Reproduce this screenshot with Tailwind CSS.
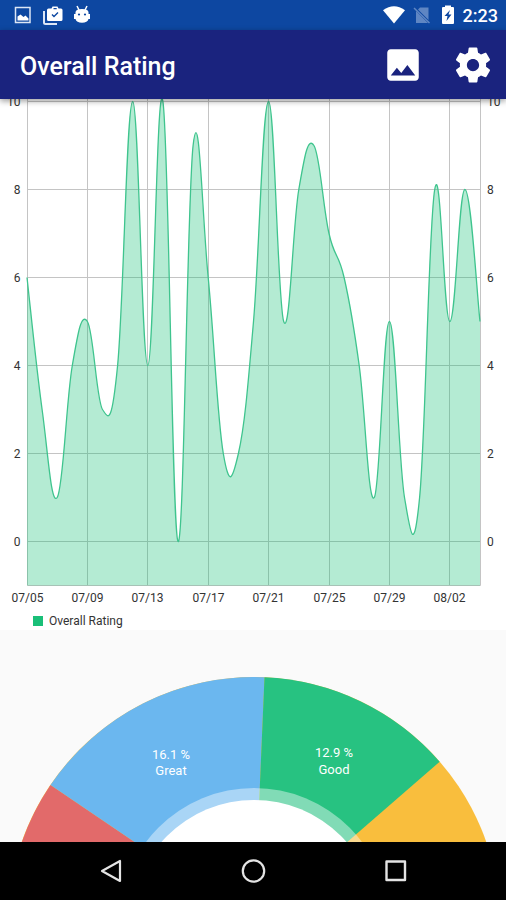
<!DOCTYPE html>
<html lang="en">
<head>
<meta charset="utf-8">
<meta name="viewport" content="width=device-width, initial-scale=1">
<title>Overall Rating</title>
<script src="https://cdn.jsdelivr.net/npm/@tailwindcss/browser@4"></script>
</head>
<body class="flex h-screen flex-col overflow-hidden bg-[#fafafa] font-['Roboto',sans-serif]">
  <div class="flex h-[30px] shrink-0 items-center justify-between bg-[#0d47a1] pr-2 pl-3 text-white">
    <div class="flex items-center gap-2">
      <svg class="size-[22px]" viewBox="0 0 22 22" fill="none" aria-label="Screenshot"><path d="M3.500 3.500h14.500v15H3.500z" stroke="#dce6f5" stroke-width="1.500"/><path d="M5.500 16.500v-4l3-2 3 2.500 2-1.500 3 3v2z" fill="#fff"/></svg>
      <svg class="size-[22px]" viewBox="0 0 22 22" aria-label="Work"><path d="M2 8v11.500c0 .8.700 1.500 1.500 1.500H15" transform="translate(0 -1)" fill="none" stroke="#dce6f5" stroke-width="2"/><path fill-rule="evenodd" d="M9.500 4.500 10.500 2.500h5l1 2H19a1.500 1.500 0 0 1 1.500 1.500v9.500A1.500 1.500 0 0 1 19 17H6.500A1.500 1.500 0 0 1 5 15.500V6A1.500 1.500 0 0 1 6.500 4.500zM11.500 4h3.200v1.200h-3.200z" fill="#fff"/><path d="m10 10.500 2 2 4-4" fill="none" stroke="#0d47a1" stroke-width="1.400"/></svg>
      <svg class="size-[22px]" viewBox="0 0 22 22" aria-label="Android"><path d="m5 2 2 4M15 2l-2 4" stroke="#fff" stroke-width="1.500"/><path d="M3.500 8Q4 5 10 5t6.500 3v2H18v5h-1.500Q15.500 18.800 10 18.800T3.500 15H2v-5h1.500z" fill="#fff"/><circle cx="7" cy="10.500" r="1.100" fill="#0d47a1"/><circle cx="13" cy="10.500" r="1.100" fill="#0d47a1"/></svg>
    </div>
    <div class="flex items-center">
      <svg class="mr-2 h-5 w-[22px]" viewBox="0 0 22 20" aria-label="Wi-Fi"><path d="M0 5.300Q11-3 22 5.300L11 18.500z" fill="#fff"/></svg>
      <svg class="mr-2 size-5" viewBox="0 0 20 20" aria-label="No SIM"><path d="M7 2.500h8.500V15L5 4.500zM3 6l12 12H3z" fill="#5f86c3"/><path d="m1 3 15.500 15" stroke="#5f86c3" stroke-width="1.500"/></svg>
      <svg class="mr-2 h-5 w-[14px]" viewBox="0 0 14 20" aria-label="Charging"><path d="M1 3q0-1 1-1h2V.500h6V2h2q1 0 1 1v15q0 1-1 1H2q-1 0-1-1z" fill="#fff"/><path d="M9 5 3.500 11h3L5.500 16l5-6.500h-3z" fill="#0d47a1"/></svg>
      <span class="pt-0.5 text-lg leading-5 font-medium">2:23</span>
    </div>
  </div>

  <header class="z-10 flex h-[69px] shrink-0 items-center bg-[#1a237e] pr-3 pl-5 text-white shadow-[0_2px_6px_rgba(0,0,0,0.4)]">
    <h1 class="flex-1 pt-1 text-[25px] leading-8 font-medium">Overall Rating</h1>
    <button class="mr-7 size-[42px]" aria-label="Save as image"><svg class="size-[42px]" viewBox="0 0 24 24" fill="#fff"><path d="M21 19V5c0-1.100-.9-2-2-2H5c-1.100 0-2 .9-2 2v14c0 1.100.9 2 2 2h14c1.100 0 2-.9 2-2zM8.500 13.500l2.500 3.010L14.500 12l4.500 6H5l3.500-4.500z"/></svg></button>
    <button class="size-[42px]" aria-label="Settings"><svg class="size-[42px]" viewBox="0 0 24 24" fill="#fff"><path d="M19.430 12.980c.04-.32.070-.64.070-.98s-.03-.66-.07-.98l2.110-1.650c.19-.15.240-.42.120-.64l-2-3.460c-.12-.22-.39-.3-.61-.22l-2.490 1c-.52-.4-1.080-.73-1.690-.98l-.38-2.650C14.460 2.180 14.250 2 14 2h-4c-.25 0-.46.180-.49.420l-.38 2.650c-.61.250-1.170.590-1.690.980l-2.490-1c-.23-.09-.49 0-.61.220l-2 3.460c-.13.220-.07.490.120.640l2.110 1.650c-.04.320-.07.650-.07.980s.030.660.070.980l-2.110 1.650c-.19.150-.24.420-.12.640l2 3.460c.12.220.39.300.61.220l2.490-1c.52.400 1.080.730 1.690.980l.38 2.650c.03.240.240.420.490.420h4c.25 0 .46-.18.490-.42l.38-2.650c.61-.25 1.170-.59 1.690-.98l2.490 1c.23.090.49 0 .61-.22l2-3.460c.12-.22.070-.49-.12-.64l-2.110-1.650zM12 15.500c-1.930 0-3.500-1.570-3.500-3.500s1.570-3.500 3.500-3.500 3.500 1.570 3.500 3.500-1.570 3.500-3.500 3.500z"/></svg></button>
  </header>

  <main class="min-h-0 flex-1 overflow-hidden">
    <section class="bg-white" aria-label="Overall rating by day">
      <svg id="line" class="block w-full" viewBox="0 99 506 513" role="img" aria-label="Rating line chart">
        <g id="grid" fill="none" stroke="#c4c4c4" stroke-width="1"></g>
        <path id="area" fill="#06be6d" fill-opacity="0.3"/>
        <path id="stroke" fill="none" stroke="#3fc48e" stroke-width="1.300"/>
        <g id="labels" class="text-[12px]" fill="#333"></g>
      </svg>
      <div class="flex items-center gap-1.5 pl-[33px]">
        <span class="size-[10px] bg-[#1abf78]"></span>
        <span class="text-[12px] leading-[18px] text-[#333]">Overall Rating</span>
      </div>
    </section>
    <section aria-label="Rating distribution">
      <svg class="block w-full" viewBox="0 630 506 540" role="img" aria-label="Rating pie chart">
        <circle cx="254" cy="923" r="246" fill="#f9be3d"/>
        <path d="M254 923 50.500 785A246 246 0 0 0 254 1169z" fill="#e26a6a"/>
        <path d="M254 923 50.500 785A246 246 0 0 1 264.500 677.200z" fill="#6bb7ef"/>
        <path d="M254 923 264.500 677.200A246 246 0 0 1 439.700 761.700z" fill="#27c281"/>
        <circle cx="254" cy="923" r="135" fill="#fff" fill-opacity="0.42"/>
        <circle cx="254" cy="923" r="123" fill="#fff"/>
        <g class="text-[13px]" fill="#fff" text-anchor="middle">
          <text x="171" y="759">16.1 %</text><text x="171" y="775">Great</text>
          <text x="334" y="757">12.9 %</text><text x="334" y="774">Good</text>
        </g>
      </svg>
    </section>
  </main>

  <nav class="flex h-[58px] shrink-0 items-center bg-black px-10" aria-label="System">
    <button class="flex flex-1 justify-center" aria-label="Back"><svg class="size-[26px]" viewBox="0 0 26 26" fill="none" stroke="#e4e4e4" stroke-width="2.200" stroke-linejoin="round"><path d="M22 3v20L4 13z"/></svg></button>
    <button class="flex flex-1 justify-center" aria-label="Home"><svg class="size-[26px]" viewBox="0 0 26 26" fill="none" stroke="#e4e4e4" stroke-width="2.200"><circle cx="13.500" cy="13" r="10.700"/></svg></button>
    <button class="flex flex-1 justify-center" aria-label="Recent apps"><svg class="size-[26px]" viewBox="0 0 26 26" fill="none" stroke="#e4e4e4" stroke-width="2.400" stroke-linejoin="round"><path d="M4.500 3.500h18.500v18.500H4.500z"/></svg></button>
  </nav>

<script>
  const ratings = [6,3,1,4,5,3,4,10,4,10,0,9,6,2,2,5,10,5,8,9,7,6,4,1,5,1,1,8,5,8,5];
  const dates = ['07/05','07/09','07/13','07/17','07/21','07/25','07/29','08/02'];
  const px = d => 27 + d * 15.1, py = v => 541.5 - v * 44;
  const n = ratings.length;
  const at = i => { const k = Math.max(0, Math.min(n - 1, i)); return [px(k), py(ratings[k])]; };
  // Cubic smoothing with an intensity of 0.2
  let d = 'M' + at(0).join(' ');
  for (let i = 1; i < n; i++) {
    const a = at(i - 2), b = at(i - 1), c = at(i), e = at(i + 1);
    d += `C${b[0] + (c[0] - a[0]) * .2} ${b[1] + (c[1] - a[1]) * .2} ${c[0] - (e[0] - b[0]) * .2} ${c[1] - (e[1] - b[1]) * .2} ${c[0]} ${c[1]}`;
  }
  document.getElementById('stroke').setAttribute('d', d);
  document.getElementById('area').setAttribute('d', d + `V585.5H${px(0)}Z`);
  let grid = `<path d="M27.5 99V585.500H480.500V99"/>`, labels = '';
  for (let v = 0; v <= 10; v += 2) {
    grid += `<path d="M27 ${py(v)}H480"/>`;
    labels += `<text x="20.500" y="${py(v) + 4}" text-anchor="end">${v}</text><text x="487" y="${py(v) + 4}">${v}</text>`;
  }
  dates.forEach((t, i) => {
    const x = Math.floor(px(i * 4)) + .5;
    if (i) grid += `<path d="M${x} 99V585"/>`;
    labels += `<text x="${x}" y="602" text-anchor="middle">${t}</text>`;
  });
  document.getElementById('grid').innerHTML = grid;
  document.getElementById('labels').innerHTML = labels;
</script>
</body>
</html>
